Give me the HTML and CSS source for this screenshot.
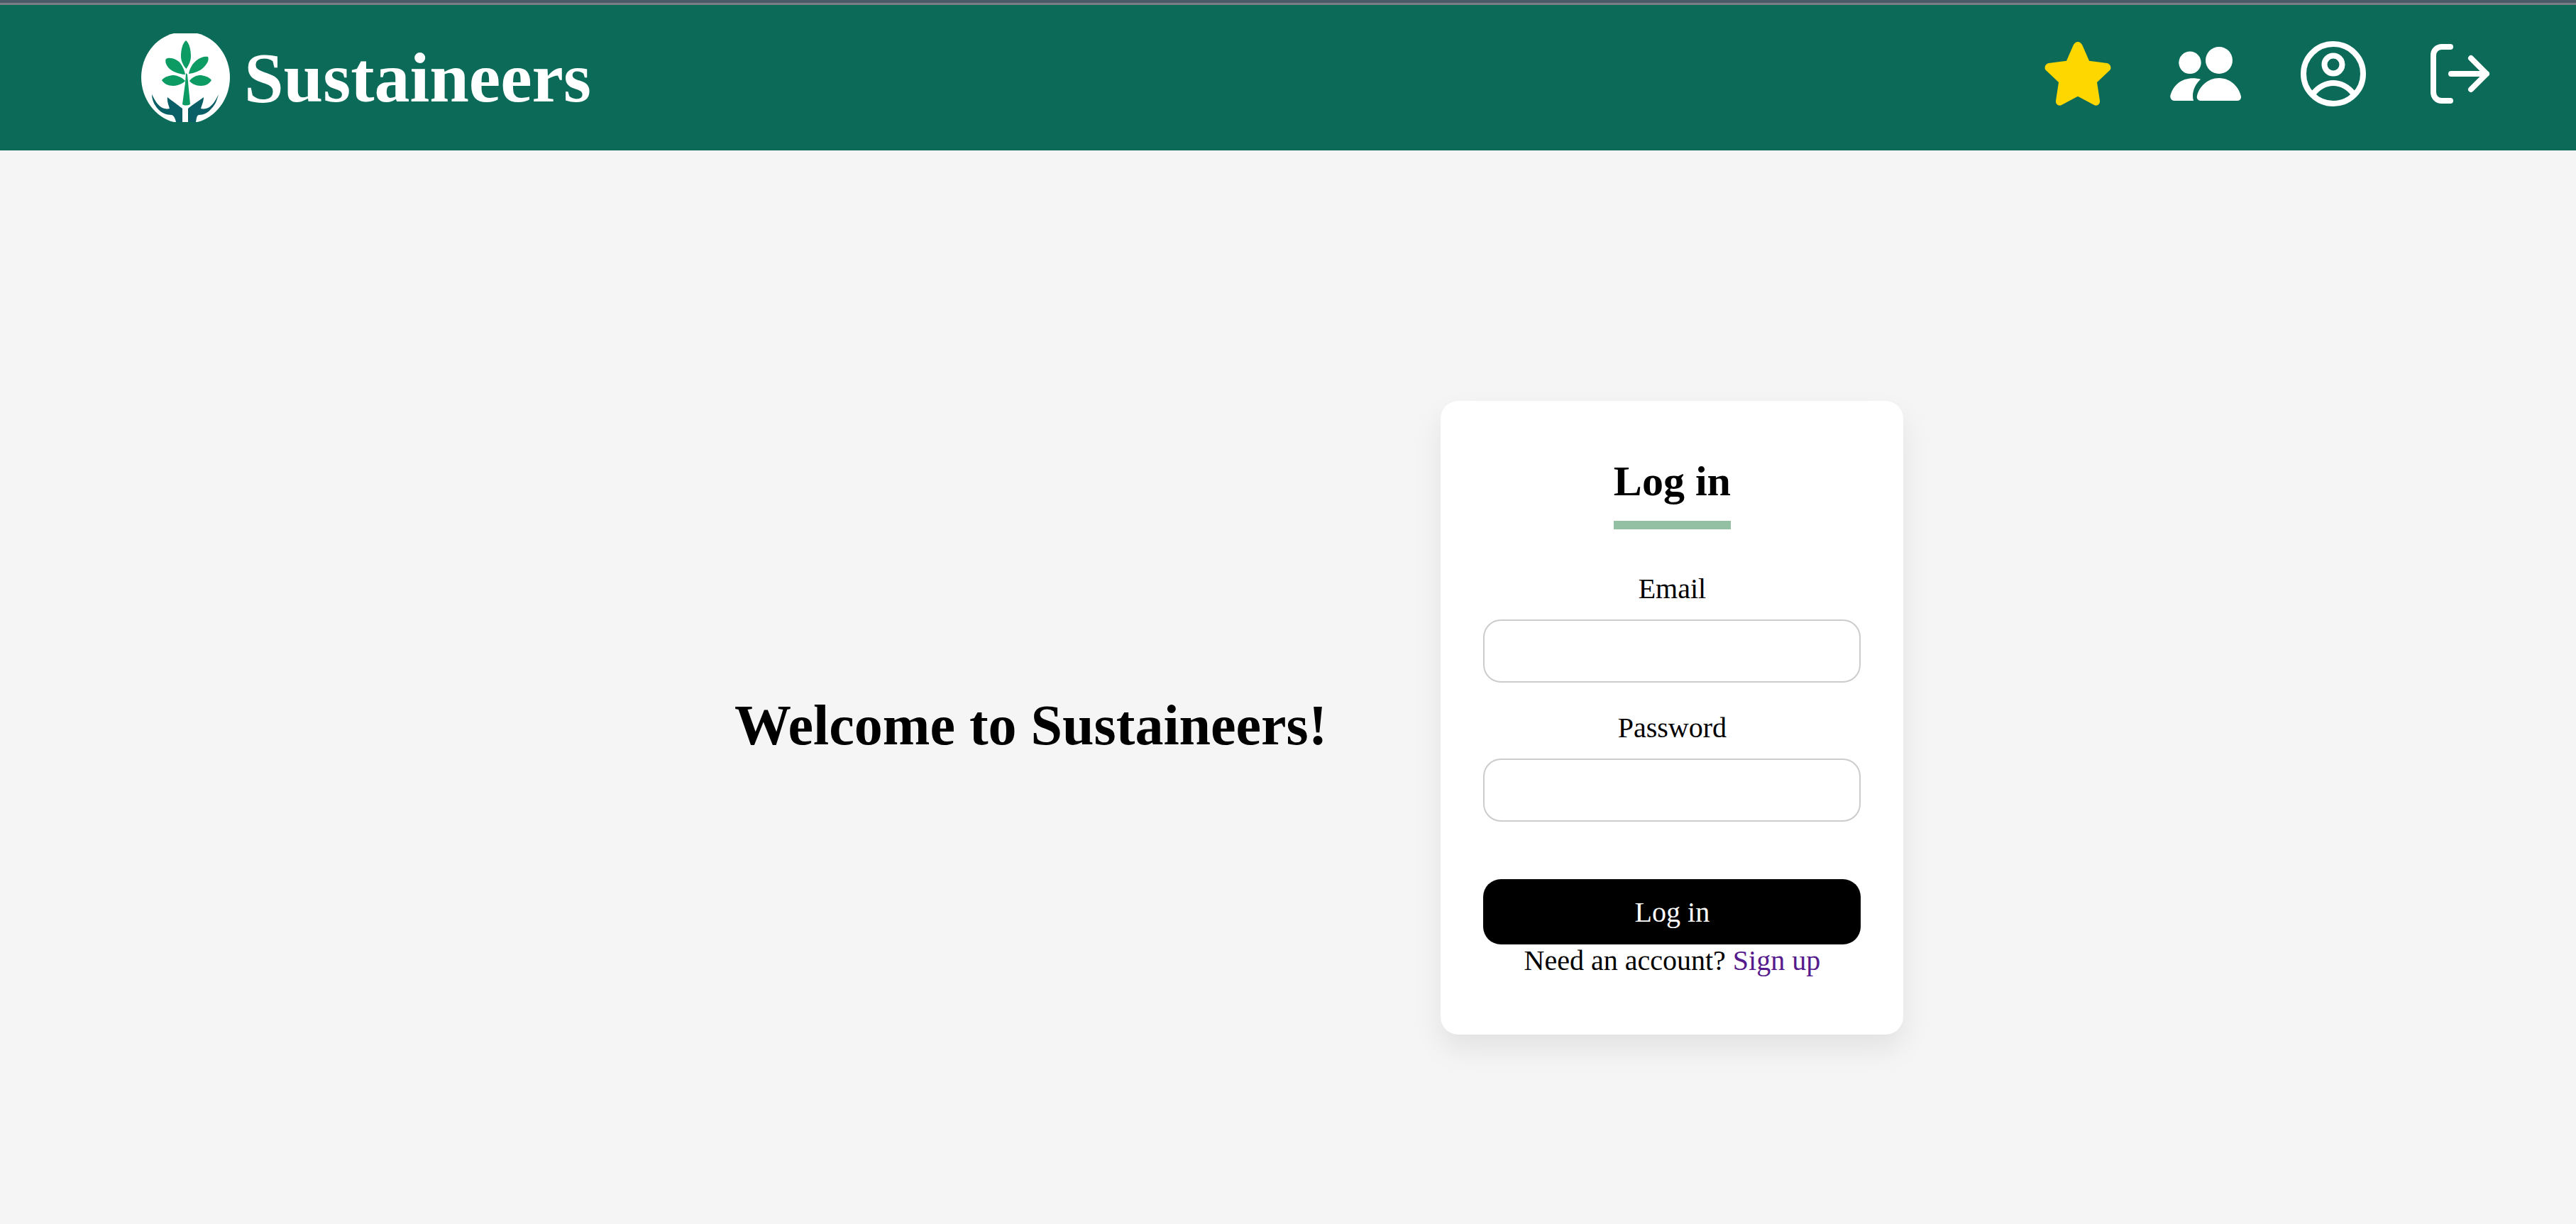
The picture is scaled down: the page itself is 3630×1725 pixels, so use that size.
FILE: index.html
```html
<!DOCTYPE html>
<html lang="en">
<head>
  <meta charset="UTF-8" />
  <meta name="viewport" content="width=device-width, initial-scale=1.0"/>
  <title>Sustaineers - Log in</title>
  <link rel="stylesheet" href="styles.css">
</head>
<body>
  <div class="top-strip"></div>

  <header class="navbar">
    <a class="brand" href="#">
      <svg class="brand-logo" viewBox="0 0 125 125" role="img" aria-label="Sustaineers logo">
        <path fill="#fff" d="M46 0H79C105 6 125 32 125 62C125 92 105 119 79 125H46C20 119 0 92 0 62C0 32 20 6 46 0Z"/>
        <g fill="#0b9b63">
          <path d="M63 10C68 14 70 24 70 32C70 40 66 46 63.500 50C60 46 56 40 56 32C56 24 58 14 63 10Z"/>
          <path d="M35 36C40 33 50 36 55 42C59 47 61 53 62 58C52 57 43 54 38 48C35 44 33 39 35 36Z"/>
          <path d="M94 33C96 37 93 43 88 48C83 53 75 56 67 57C68 50 72 43 78 38C83 34 89 32 94 33Z"/>
          <path d="M29 66C33 61 40 59 46 59C53 60 58 63 62 67C58 71 52 74 45 74C38 74 32 71 29 66Z"/>
          <path d="M99 66C95 61 88 59 82 59C75 60 71 63 68 67C71 71 77 74 84 74C91 74 96 71 99 66Z"/>
          <path d="M63 56L65 58L69 100C65 102 61 102 58 100L62 70Z"/>
        </g>
        <g fill="#0a5f66">
          <path d="M15 86C18 92 22 100 28 104C31 106 36 107 40 106C39 102 36 96 37 90C43 95 52 101 58 106V125H49C48 120 46 116 43 115C35 115 28 112 23 106C18 100 15 93 15 86Z"/>
          <path d="M109 86C107 93 105 100 99 106C94 112 88 115 81 115C78 116 78 120 77 125H66V106C72 101 81 95 88 90C88 96 85 102 84 106C88 107 93 106 96 104C102 100 106 92 109 86Z"/>
        </g>
      </svg>
      <span class="brand-name">Sustaineers</span>
    </a>

    <nav class="nav-icons">
      <a href="#" aria-label="Favourites">
        <svg class="icon-star" viewBox="0 0 94 90">
          <path fill="#ffd700" d="M47 0C50 0 52 2 53.500 5L63 26.700L88 30C93 31 95 37 92 40L74 57L78 83C78.500 88 74 91 70 89L47 76.700L24 89C20 91 15.500 88 16 83L20 57L2 40C-1 37 1 31 6 30L31 26.700L40.500 5C42 2 44 0 47 0Z"/>
        </svg>
      </a>
      <a href="#" aria-label="Community">
        <svg class="icon-users" viewBox="0 0 101 76">
          <g fill="#fff">
            <circle cx="28" cy="22.300" r="15.700"/>
            <circle cx="69" cy="19" r="19"/>
            <path d="M43 45.700C30 42 8 44 0.500 68C-0.500 72 2 76 6 76H33C30 66 34 54 43 45.700Z"/>
            <path d="M69 44C86 44 98 58 100 70C100.500 73 98 76 95 76H43C39 76 37 72 38 69C41 56 53 44 69 44Z"/>
          </g>
        </svg>
      </a>
      <a href="#" aria-label="Profile">
        <svg class="icon-profile" viewBox="0 0 92 92" fill="none" stroke="#fff" stroke-width="8">
          <circle cx="46" cy="46" r="42"/>
          <circle cx="46" cy="33" r="12.500"/>
          <path d="M17 75C24 65 35 59 46 59C57 59 68 65 75 75"/>
        </svg>
      </a>
      <a class="nav-logout" href="#" aria-label="Log out">
        <svg class="icon-logout" viewBox="0 0 84 84" fill="none" stroke="#fff" stroke-width="8" stroke-linecap="round" stroke-linejoin="round">
          <path d="M28 4H16C9 4 4 9 4 16V68C4 75 9 80 16 80H28"/>
          <path d="M29 42H79M57 20L79 42L57 64"/>
        </svg>
      </a>
    </nav>
  </header>

  <main class="content">
    <h1 class="welcome">Welcome to Sustaineers!</h1>

    <form class="login-card">
      <h2 class="login-title">Log in</h2>
      <label class="field-label" for="email">Email</label>
      <input class="field-input" type="email" id="email">
      <label class="field-label" for="password">Password</label>
      <input class="field-input" type="password" id="password">
      <button class="login-button" type="button">Log in</button>
      <p class="signup-text">Need an account? <a href="#">Sign up</a></p>
    </form>
  </main>
</body>
</html>
```

FILE: styles.css
```css
* {
  box-sizing: border-box;
}
html, body {
  margin: 0;
  height: 100%;
}
body {
  font-family: "Liberation Serif", "Times New Roman", serif;
  font-size: 40px;
  background-color: #f5f5f5;
  color: #000;
  overflow: hidden;
}
.top-strip {
  height: 7px;
  background: linear-gradient(#4a5a66 0 4px, #7a7f85 4px);
}
.navbar {
  height: 205px;
  background-color: #0c6b58;
  display: flex;
  align-items: center;
  justify-content: space-between;
  padding: 0 121px 0 199px;
}
.brand {
  display: flex;
  align-items: center;
  gap: 20px;
  color: #fff;
  text-decoration: none;
}
.brand-logo {
  width: 125px;
  height: 125px;
  display: block;
}
.brand-name {
  font-size: 100px;
  font-weight: bold;
  line-height: 1;
}
.nav-icons {
  display: flex;
  align-items: center;
  gap: 83px;
  margin-bottom: 11px;
}
.nav-icons a {
  display: block;
}
.nav-icons svg {
  display: block;
}
.nav-icons .nav-logout {
  margin-left: 8px;
}
.icon-star {
  width: 94px;
  height: 90px;
}
.icon-users {
  width: 101px;
  height: 76px;
}
.icon-profile {
  width: 92px;
  height: 92px;
}
.icon-logout {
  width: 84px;
  height: 84px;
}
.content {
  display: flex;
  align-items: center;
  gap: 160px;
  padding: 353px 0 0 1035px;
}
.welcome {
  margin: 22px 0 0;
  font-size: 80px;
  font-weight: bold;
  white-space: nowrap;
}
.login-card {
  width: 652px;
  height: 893px;
  background: #fff;
  border-radius: 25px;
  box-shadow: 0 20px 40px rgba(0, 0, 0, 0.08);
  padding: 79px 60px 0;
  display: flex;
  flex-direction: column;
  align-items: center;
}
.login-title {
  margin: 0 0 61px;
  font-size: 60px;
  font-weight: bold;
  line-height: 69px;
  padding-bottom: 21px;
  border-bottom: 12px solid #93bfa3;
}
.field-label {
  line-height: 46px;
  margin-bottom: 20px;
}
.field-input {
  width: 100%;
  height: 89px;
  border: 2.500px solid #ccc;
  border-radius: 25px;
  background: #fff;
  margin-bottom: 41px;
}
.login-button {
  width: 100%;
  height: 92px;
  margin-top: 40px;
  background: #000;
  color: #fff;
  border: 0;
  border-radius: 25px;
  font-family: inherit;
  font-size: 40px;
}
.signup-text {
  margin: 0;
  line-height: 46px;
}
.signup-text a {
  color: #551a8b;
  text-decoration: none;
}
```
